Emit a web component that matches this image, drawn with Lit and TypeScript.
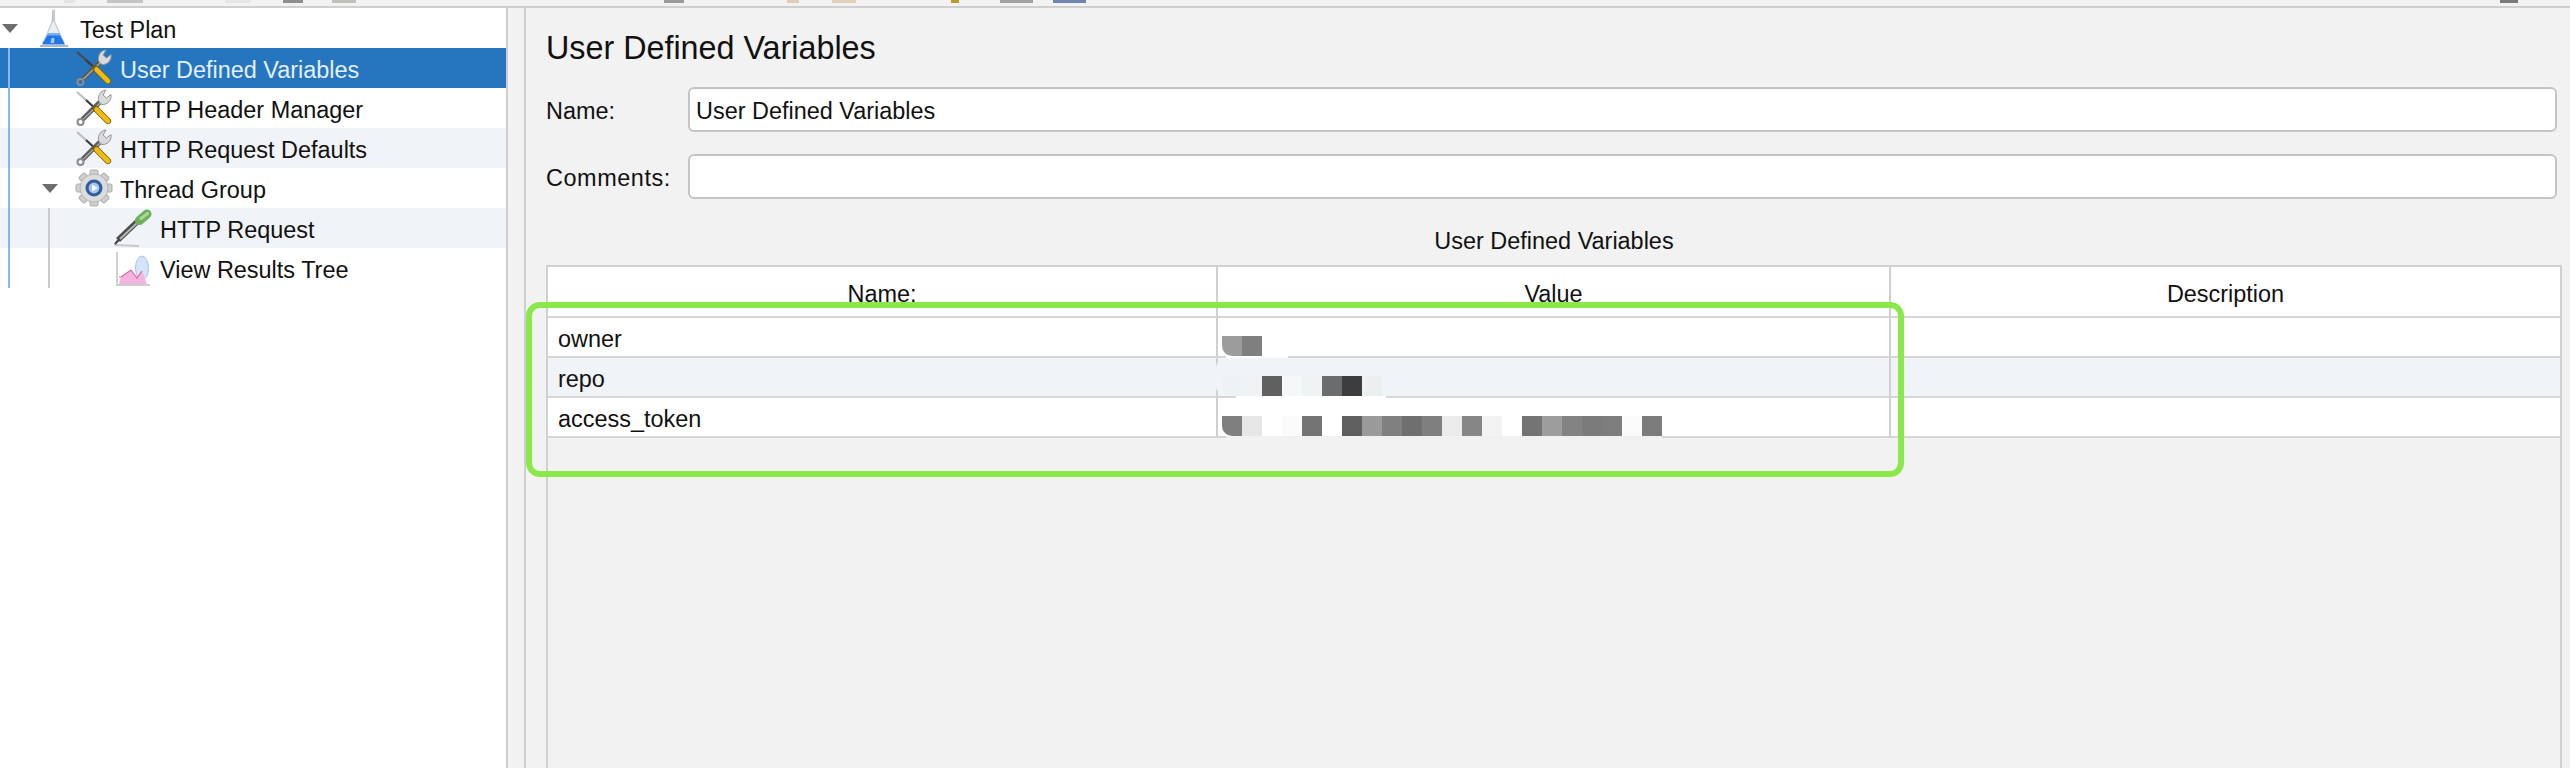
import { LitElement, html, css, svg } from "lit";
import { customElement } from "lit/decorators.js";

const tools = (tip: string) => svg`<svg class="ic" width="38" height="38" viewBox="0 0 38 38">
  <path d="M2 3 L22 21" stroke="${tip}" stroke-width="2.2" fill="none"/>
  <path d="M11 11 L22 21" stroke="#3c3c3c" stroke-width="2" fill="none"/>
  <path d="M7 31 L26 12" stroke="#5a5a5a" stroke-width="4.6" fill="none"/>
  <path d="M8.5 30 L26 13" stroke="#a4a4a4" stroke-width="1.6" fill="none"/>
  <circle cx="5.5" cy="33" r="3" fill="none" stroke="#8c8c8c" stroke-width="2"/>
  <path d="M36 5.5 L31.5 9 L28 6 L31 1 A8 8 0 0 0 23.5 8 A7 7 0 0 0 27 15.5 A8.5 8.5 0 0 0 36 5.5 Z" fill="#dadada" stroke="#969696" stroke-width="1"/>
  <path d="M21 20 L33 32" stroke="#7a5f00" stroke-width="6.2" stroke-linecap="round" fill="none"/>
  <path d="M21.5 20.5 L33 32" stroke="#f0bb12" stroke-width="4.6" stroke-linecap="round" fill="none"/>
</svg>`;

const flask = svg`<svg class="ic" width="30" height="38" viewBox="0 0 30 38">
  <path d="M14 1 L15.6 1 L15.6 13 L25 34 L4 34 L13 13 Z" fill="#e9ecf1" stroke="#c3c8d1" stroke-width="1.1"/>
  <path d="M14 2 L14 13" stroke="#a8adb6" stroke-width="1"/>
  <path d="M9.5 24 L20 24 L26 35.5 L3 35.5 Z" fill="#2277e6"/>
  <path d="M9.5 24 L20 24 L21 26.5 L8.5 26.5 Z" fill="#7fb0ee"/>
  <path d="M12.5 29 L15.5 29 L15 34 L11.5 34 Z" fill="#9ccaf7"/>
  <path d="M1 37 L29 37" stroke="#33507f" stroke-width="1.5" opacity=".55"/>
</svg>`;

const gear = svg`<svg class="ic" width="38" height="38" viewBox="0 0 38 38">
  ${[0, 45, 90, 135, 180, 225, 270, 315].map(
    (a) => svg`<rect x="15" y="1" width="8" height="8" rx="1.5" fill="#cfcfcf" stroke="#ababab" transform="rotate(${a} 19 19)"/>`
  )}
  <circle cx="19" cy="19" r="14" fill="#dcdcdc" stroke="#b5b5b5"/>
  <circle cx="19" cy="19" r="8.5" fill="#2f5f9f"/>
  <circle cx="19" cy="19" r="5.4" fill="#a9c6ea"/>
  <path d="M17 15.5 L23 19 L17 22.5 Z" fill="#f6f9ff"/>
</svg>`;

const pipette = svg`<svg class="ic" width="38" height="38" viewBox="0 0 38 38">
  <path d="M0 36 L25 37" stroke="#bcbcbc" stroke-width="2" fill="none" opacity=".8"/>
  <path d="M4 31 L24 12" stroke="#4d4d4d" stroke-width="5.6" fill="none"/>
  <path d="M6 30 L23 14" stroke="#b8b8b8" stroke-width="1.8" fill="none"/>
  <path d="M1 35 L5 30.5" stroke="#444" stroke-width="2.2" fill="none"/>
  <path d="M25.5 11.5 L33 5" stroke="#6fae5a" stroke-width="9" stroke-linecap="round" fill="none"/>
  <path d="M27 9.5 L33.5 4.5" stroke="#a9d896" stroke-width="3.2" stroke-linecap="round" fill="none"/>
</svg>`;

const chart = svg`<svg class="ic" width="38" height="38" viewBox="0 0 38 38">
  <path d="M3 3 L3 36 L36 36" fill="none" stroke="#bdbdbd" stroke-width="1.4"/>
  <ellipse cx="28" cy="19" rx="6.5" ry="12" fill="#d3e3fa" stroke="#a9c4ee"/>
  <path d="M5 35 L7 28 L17 21 L23 29 L28 22 L33 35 Z" fill="#f4b4e0"/>
  <path d="M5 28 L7 28 L17 21 L23 29 L28 22" fill="none" stroke="#d765a8" stroke-width="1.2"/>
</svg>`;

const TREE = [
  { label: "Test Plan", level: 0, open: true, icon: flask },
  { label: "User Defined Variables", level: 1, selected: true, icon: tools("#4a4a4a") },
  { label: "HTTP Header Manager", level: 1, icon: tools("#bdbdbd") },
  { label: "HTTP Request Defaults", level: 1, alt: true, icon: tools("#bdbdbd") },
  { label: "Thread Group", level: 1, open: true, icon: gear },
  { label: "HTTP Request", level: 2, alt: true, icon: pipette },
  { label: "View Results Tree", level: 2, icon: chart },
];

const STUBS = [
  [64, 11, "#e4e4e4"], [107, 36, "#c4c4c4"], [225, 25, "#e6e6e6"], [283, 20, "#8e8e8e"],
  [332, 24, "#c0c0b8"], [664, 20, "#9a9a9a"], [787, 12, "#e0cdb8"], [832, 24, "#e0d0bc"],
  [951, 8, "#b89a30"], [1000, 33, "#a2a2a2"], [1053, 33, "#7186ad"], [2500, 18, "#7a7a7a"],
] as [number, number, string][];

const ROWS = [
  { name: "owner", cells: ["#9c9c9c", "#7f7f7f"] },
  { name: "repo", cells: ["#eff2f5", "#f0f3f5", "#606060", "#f5f8fb", "#eff3f4", "#6b6c6e", "#3d3d3f", "#ecefef"], alt: true },
  {
    name: "access_token",
    cells: ["#7f7f7f", "#e6e6e6", "#ffffff", "#fafafa", "#737373", "#ffffff", "#5f5f5f", "#9a9a9a", "#808080", "#6f6f6f", "#7f7f7f", "#ebebeb", "#868686", "#f3f3f3", "#ffffff", "#747474", "#9d9d9d", "#838383", "#7b7b7b", "#7d7d7d", "#fbfbfb", "#7c7c7c"],
  },
];

@customElement("app-root")
export class AppRoot extends LitElement {
  static styles = css`
    :host {
      display: block;
      font-family: "Liberation Sans", Arial, sans-serif;
      font-size: 23.45px;
      color: #111;
    }
    .root {
      position: relative;
      height: 768px;
      overflow: hidden;
      background: #f2f2f2;
      display: flex;
      flex-direction: column;
    }
    .top {
      position: relative;
      height: 8px;
      flex: none;
      box-sizing: border-box;
      border-bottom: 2px solid #cfcfcf;
    }
    .stub {
      position: absolute;
      top: 0;
      height: 3px;
      filter: blur(0.6px);
    }
    .main { flex: 1; display: flex; min-height: 0; }
    .tree {
      position: relative;
      width: 508px;
      flex: none;
      box-sizing: border-box;
      background: #fff;
      border-right: 2px solid #cfcfcf;
    }
    .guide { position: absolute; width: 2px; }
    .g1 { left: 8px; top: 40px; height: 240px; background: #86b8ef; }
    .g2 { left: 48px; top: 200px; height: 80px; background: #cbcbcb; }
    .row { position: relative; height: 40px; display: flex; align-items: center; white-space: nowrap; }
    .row.alt { background: #f0f3f8; }
    .row.sel { background: #2675bf; color: #e3effb; }
    .l0 { padding-left: 2px; }
    .l1 { padding-left: 42px; }
    .l2 { padding-left: 83px; }
    .twist { width: 16px; flex: none; display: flex; }
    .tri {
      width: 0; height: 0;
      border-left: 8px solid transparent;
      border-right: 8px solid transparent;
      border-top: 9px solid #6d6d6d;
    }
    .iconbox { display: flex; flex: none; }
    .l0 .iconbox { margin: 0 11px 0 21px; }
    .l1 .iconbox { margin: 0 7px 0 17px; }
    .l2 .iconbox { margin: 0 8px 0 15px; }
    .ic { display: block; }
    .txt { padding-top: 5px; }
    .strip {
      width: 18px;
      flex: none;
      box-sizing: border-box;
      border-right: 2px solid #cfcfcf;
    }
    .panel {
      flex: 1;
      min-width: 0;
      display: flex;
      flex-direction: column;
      padding-left: 20px;
      padding-right: 8px;
    }
    .title { height: 79px; box-sizing: border-box; padding-top: 2px; flex: none; display: flex; align-items: center; font-size: 32.3px; }
    .form-row { display: flex; align-items: center; margin-right: 5px; height: 45px; flex: none; }
    .form-row + .form-row { margin-top: 22px; }
    .form-row .lbl { width: 142px; flex: none; padding-top: 3px; }
    .lbl.wide { letter-spacing: 0.55px; }
    .field {
      flex: 1;
      height: 45px;
      box-sizing: border-box;
      background: #fff;
      border: 2px solid #c4c4c4;
      border-radius: 6px;
      padding: 3px 6px 0;
      display: flex;
      align-items: center;
    }
    .caption { padding: 30px 0 12px; line-height: 24px; text-align: center; flex: none; }
    .table {
      flex: 1;
      border: 2px solid #d0d0d0;
      border-bottom: none;
    }
    .tr { display: grid; grid-template-columns: 670px 673px 1fr; background: #fff; }
    .tr.alt { background: #f0f3f8; }
    .tr > div {
      height: 40px;
      box-sizing: border-box;
      border-bottom: 2px solid #d6d6d6;
      border-right: 2px solid #d0d0d0;
      display: flex;
      align-items: center;
    }
    .tr > div:last-child { border-right: none; }
    .th > div { height: 51px; justify-content: center; padding-top: 6px; }
    .name { padding: 4px 0 0 10px; }
    .value { position: relative; padding-left: 4px; align-items: flex-end !important; }
    .mosaic { display: flex; position: relative; }
    .mosaic i { display: block; width: 20px; height: 20px; }
    .mosaic i:first-child { border-bottom-left-radius: 10px; }
    .halo { position: absolute; left: -2px; top: 0; width: 178px; height: 38px; background: #f0f3f7; border-radius: 10px; }
    .haloline { position: absolute; background: #fff; height: 2px; }
    .hl1 { left: 8px; bottom: -2px; width: 62px; }
    .hl2 { left: 18px; bottom: -2px; width: 150px; }
    .hl3 { left: 8px; bottom: -2px; width: 436px; background: #f0f0f0; }
    .highlight {
      position: absolute;
      left: 526px;
      top: 302px;
      width: 1378px;
      height: 175px;
      box-sizing: border-box;
      border: 6px solid #8be84a;
      border-radius: 14px;
      pointer-events: none;
    }
  `;

  render() {
    return html`<div class="root">
      <div class="top">
        ${STUBS.map(([x, w, c]) => html`<span class="stub" style="left:${x}px;width:${w}px;background:${c}"></span>`)}
      </div>
      <div class="main">
        <div class="tree">
          ${TREE.map(
            (r) => html`<div class="row l${r.level} ${r.selected ? "sel" : ""} ${r.alt ? "alt" : ""}">
              <span class="twist">${r.open ? html`<span class="tri"></span>` : ""}</span>
              <span class="iconbox">${r.icon}</span>
              <span class="txt">${r.label}</span>
            </div>`
          )}
          <div class="guide g1"></div>
          <div class="guide g2"></div>
        </div>
        <div class="strip"></div>
        <div class="panel">
          <div class="title">User Defined Variables</div>
          <div class="form-row"><span class="lbl">Name:</span><div class="field">User Defined Variables</div></div>
          <div class="form-row"><span class="lbl wide">Comments:</span><div class="field"></div></div>
          <div class="caption">User Defined Variables</div>
          <div class="table">
            <div class="tr th"><div>Name:</div><div>Value</div><div>Description</div></div>
            ${ROWS.map(
              (r, i) => html`<div class="tr ${r.alt ? "alt" : ""}">
                <div class="name">${r.name}</div>
                <div class="value">
                  ${i === 1 ? html`<span class="halo"></span>` : ""}
                  <span class="haloline hl${i + 1}"></span>
                  <span class="mosaic">${r.cells.map((c) => html`<i style="background:${c}"></i>`)}</span>
                </div>
                <div></div>
              </div>`
            )}
          </div>
        </div>
      </div>
      <div class="highlight"></div>
    </div>`;
  }
}
